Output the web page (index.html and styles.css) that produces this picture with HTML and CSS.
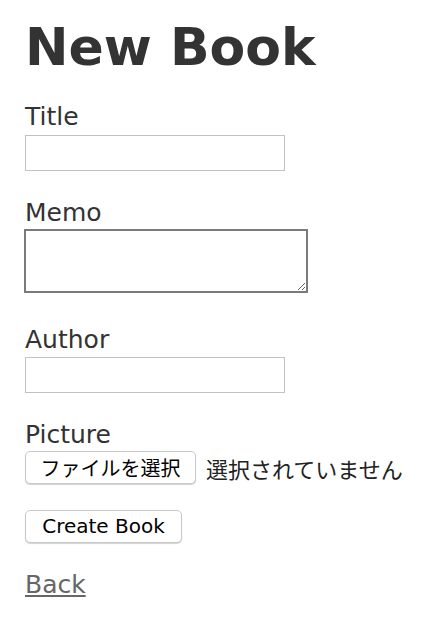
FILE: index.html
```html
<!DOCTYPE html>
<html>
<head>
<meta charset="utf-8">
<link rel="stylesheet" href="styles.css">
</head>
<body>
<div class="page">
  <h1 class="title">New Book</h1>
  <form class="form">
    <div class="field field-title">
      <label class="label">Title</label>
      <input class="text-input" type="text">
    </div>
    <div class="field field-memo">
      <label class="label">Memo</label>
      <textarea class="textarea"></textarea>
    </div>
    <div class="field field-author">
      <label class="label">Author</label>
      <input class="text-input" type="text">
    </div>
    <div class="field field-picture">
      <label class="label">Picture</label>
      <div class="file-row">
        <button type="button" class="btn btn-file">ファイルを選択</button>
        <span class="file-status">選択されていません</span>
      </div>
    </div>
    <div class="actions">
      <button type="button" class="btn btn-submit">Create Book</button>
    </div>
  </form>
  <a class="back" href="#">Back</a>
</div>
</body>
</html>
```
FILE: styles.css
```css
html, body {
  margin: 0;
  padding: 0;
  background: #fff;
}
.page {
  padding: 17px 25px 0 25px;
  color: #333;
  font-family: "DejaVu Sans", Verdana, sans-serif;
  display: flex;
  flex-direction: column;
  align-items: flex-start;
}
.title {
  margin: 0;
  font-size: 52px;
  line-height: 60px;
  font-weight: bold;
}
.form {
  display: flex;
  flex-direction: column;
  align-items: flex-start;
  margin: 0;
}
.field {
  display: flex;
  flex-direction: column;
  align-items: flex-start;
}
.label {
  font-size: 25px;
  line-height: 29px;
}
.field-title { margin-top: 25px; }
.field-memo { margin-top: 27px; }
.field-author { margin-top: 32px; }
.field-picture { margin-top: 27px; }
.text-input {
  box-sizing: border-box;
  width: 260px;
  height: 36px;
  margin: 4px 0 0 0;
  border: 1px solid #c2c2c2;
  padding: 0;
  background: #fff;
}
.field-author .text-input { margin-top: 3px; }
.textarea {
  box-sizing: border-box;
  width: 284px;
  height: 64px;
  margin: 2px 0 0 -1px;
  border: 2px solid #7a7a7a;
  padding: 0;
  resize: both;
  background: #fff;
}
.file-row {
  display: flex;
  align-items: center;
  margin-top: 2px;
  gap: 10px;
}
.btn {
  box-sizing: border-box;
  height: 33px;
  background: #fff;
  border: 1px solid #c9c9c9;
  border-radius: 5px;
  box-shadow: 0 1px 1px rgba(0,0,0,0.18);
  color: #000;
  padding: 0 14px;
  font-family: "DejaVu Sans", "Noto Sans CJK JP", sans-serif;
  font-size: 20px;
  line-height: 31px;
}
.btn-file {
  width: 171px;
  padding: 0;
  font-family: "Noto Sans CJK JP", sans-serif;
  font-size: 20px;
}
.file-status {
  font-family: "Noto Sans CJK JP", sans-serif;
  font-size: 22px;
  color: #222;
}
.actions {
  margin-top: 26px;
}
.btn-submit {
  width: 157px;
  padding: 0;
}
.back {
  margin-top: 27px;
  font-size: 25px;
  line-height: 29px;
  color: #666;
}
```
